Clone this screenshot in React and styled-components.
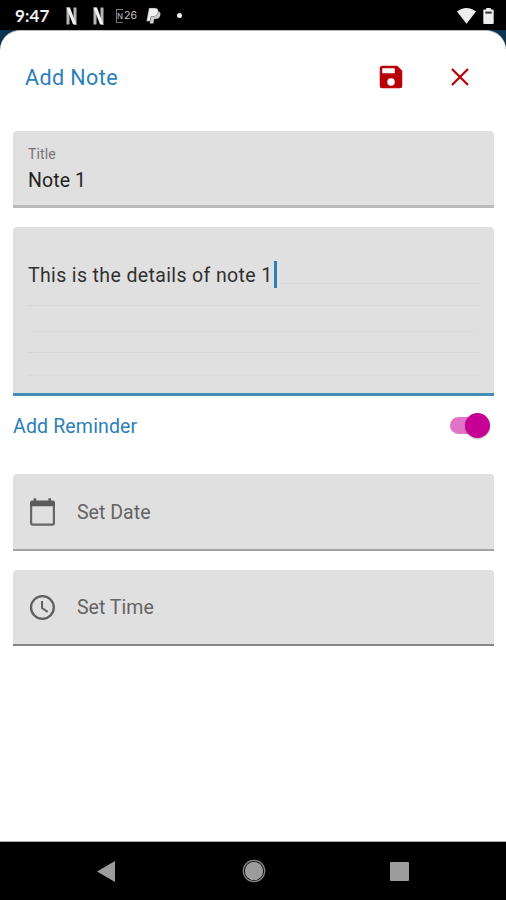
import React from 'react';
import styled, { createGlobalStyle } from 'styled-components';

const Global = createGlobalStyle`
  * { box-sizing: border-box; }
  body { margin: 0; background: #000; }
`;

const Screen = styled.div`
  width: 506px;
  height: 900px;
  display: flex;
  flex-direction: column;
  overflow: hidden;
  background: #0d344f;
  font-family: Roboto, 'Liberation Sans', sans-serif;
`;

const StatusBar = styled.header`
  height: 30px;
  flex: none;
  display: flex;
  align-items: center;
  padding: 1px 12px 0 15px;
  background: #000;
  color: #f2f2f2;
`;

const Clock = styled.span`
  width: 51px;
  font: 700 17px/20px Lato, sans-serif;
  letter-spacing: 0.1px;
`;

const Notifications = styled.div`
  flex: 1;
  display: flex;
  align-items: center;
`;

const StatusIcon = styled.svg`
  display: block;
  flex: none;
  margin-right: ${(p) => p.$gap || 0}px;
  overflow: visible;
`;

const BankBadge = styled.span`
  display: flex;
  align-items: center;
  width: 30px;
  font: 400 10.5px/12px Inter, sans-serif;
  color: #c4c4c4;
`;

const BankInitial = styled.span`
  width: 7px;
  height: 14px;
  margin-right: 1px;
  border: solid #777;
  border-width: 1px 0 1px 1px;
  font-size: 8px;
  line-height: 12px;
`;

const Dot = styled.span`
  width: 5px;
  height: 5px;
  border-radius: 50%;
  background: #eee;
`;

const Sheet = styled.main`
  flex: 1;
  display: flex;
  flex-direction: column;
  padding: 0 12px 0 13px;
  border-top: 1px solid #bbb;
  border-bottom: 1px solid #aaa;
  border-radius: 20px 20px 0 0;
  background: #fff;
`;

const TitleBar = styled.div`
  height: 100px;
  flex: none;
  display: flex;
  align-items: center;
  padding: 0 25px 8px 12px;
`;

const Heading = styled.h1`
  flex: 1;
  margin: 0;
  padding-top: 2px;
  font-size: 21.5px;
  font-weight: 400;
  line-height: 28px;
  letter-spacing: 0.42px;
  color: #2a80b9;
`;

const IconButton = styled.button`
  display: flex;
  padding: 0;
  border: 0;
  background: none;
  color: #b90008;
  margin-left: ${(p) => p.$gap || 0}px;
`;

const Field = styled.div`
  flex: none;
  height: ${(p) => p.$height}px;
  margin-bottom: ${(p) => p.$gap}px;
  padding: ${(p) => p.$pad || '0 15px'};
  display: flex;
  flex-direction: ${(p) => (p.$row ? 'row' : 'column')};
  align-items: ${(p) => (p.$row ? 'center' : 'stretch')};
  border-bottom: ${(p) => p.$line};
  border-radius: 4px 4px 0 0;
  background: #e0e0e0;
`;

const Label = styled.label`
  font-size: 14px;
  line-height: 16px;
  letter-spacing: 0.15px;
  color: #757575;
`;

const Value = styled.span`
  margin-top: 7px;
  font-size: 19.5px;
  line-height: 24px;
  letter-spacing: 0.1px;
  color: #242424;
`;

const NoteText = styled.div`
  height: 27px;
  display: flex;
  font-size: 19.5px;
  line-height: 29px;
  letter-spacing: 0.37px;
  white-space: nowrap;
  color: #303030;
`;

const Caret = styled.span`
  width: 3px;
  height: 27px;
  margin-left: 1px;
  background: #2a80b9;
`;

const NoteBody = styled.div`
  height: 116px;
  display: flex;
  flex-direction: column;
  background-image: linear-gradient(#d9d9d9, #d9d9d9), linear-gradient(#d7d7d7, #d7d7d7),
    linear-gradient(#dbdbdb, #dbdbdb), linear-gradient(#d7d7d7, #d7d7d7),
    linear-gradient(#dadada, #dadada);
  background-size: 200px 1px, 100% 1px, 100% 1px, 100% 1px, 100% 1px;
  background-repeat: no-repeat;
  background-position: 252px 22px, 0 44px, 0 70px, 0 91px, 0 114px;
`;

const Prompt = styled.span`
  padding-top: 2px;
  font-size: 19.5px;
  line-height: 24px;
  letter-spacing: 0.03px;
  color: #646464;
  margin-left: 20px;
`;

const ReminderRow = styled.div`
  flex: none;
  height: 58px;
  margin-bottom: 20px;
  display: flex;
  align-items: center;
  justify-content: space-between;
  padding-right: 4px;
`;

const ReminderLabel = styled.span`
  padding-top: 4px;
  font-size: 19.5px;
  line-height: 24px;
  letter-spacing: 0.16px;
  color: #2a80b9;
`;

const Track = styled.span`
  width: 36px;
  height: 17px;
  margin-right: 4px;
  border-radius: 9px;
  background: #e274c7;
  display: flex;
  align-items: center;
  justify-content: flex-end;
`;

const Thumb = styled.span`
  flex: none;
  width: 25px;
  height: 25px;
  margin-right: -4px;
  border-radius: 50%;
  background: #c60094;
  box-shadow: 0 1px 2px rgba(0, 0, 0, 0.3);
`;

const NavBar = styled.nav`
  height: 58px;
  flex: none;
  display: grid;
  grid-template-columns: 211px 85px 207px;
  align-items: center;
  justify-items: center;
  background: #000;
`;

const NavIcon = styled.svg`
  display: block;
`;

const NetflixMark = ({ gap }) => (
  <StatusIcon $gap={gap} width="11" height="18" viewBox="0 0 11 18">
    <path d="M.5.5h3v16.7l-3 .5zM7.5.5h3v17.2l-3-.5z" fill="#b5b5b5" />
    <path d="M.5.5h3.4l6.6 17.2-3.5-.5z" fill="#f1f1f1" />
  </StatusIcon>
);

export default function App() {
  return (
    <>
      <Global />
      <Screen>
        <StatusBar>
          <Clock>9:47</Clock>
          <Notifications>
            <NetflixMark gap={16} />
            <NetflixMark gap={12} />
            <BankBadge><BankInitial>N</BankInitial>26</BankBadge>
            <StatusIcon $gap={16} width="15" height="16" viewBox="0 0 15 16">
              <path d="M5.2 3.2h6.3c2.5 0 3.4 1.7 2.8 4-.7 2.7-2.3 3.8-4.9 3.8H8.2l-.9 4.6H3.8z" fill="#cfcfcf" />
              <path d="M3 0h5.7c2.9 0 4 1.7 3.5 4.1-.6 2.9-2.6 4.5-5.4 4.5H5L4.1 13.2H.5z" fill="#f0f0f0" stroke="#333" strokeWidth=".4" />
            </StatusIcon>
            <Dot />
          </Notifications>
          <StatusIcon $gap={7} width="19" height="16" viewBox="0 0 19 16">
            <path d="M0 3.6C5.5-1.2 13.5-1.2 19 3.6L9.5 15.8z" fill="#ededed" />
          </StatusIcon>
          <StatusIcon width="11" height="16" viewBox="0 0 11 16">
            <path d="M3.2 0h4.6v1.6h1.8c.7 0 1.1.4 1.1 1.1v12.2c0 .7-.4 1.1-1.1 1.1H1.4c-.7 0-1.1-.4-1.1-1.1V2.7c0-.7.4-1.1 1.1-1.1h1.8z" fill="#ededed" />
            <path d="M2.3 3.6h6.4v2H2.3z" fill="#333" />
          </StatusIcon>
        </StatusBar>
        <Sheet>
          <TitleBar>
            <Heading>Add Note</Heading>
            <IconButton aria-label="Save">
              <svg width="30" height="30" viewBox="0 0 24 24" fill="currentColor">
                <path d="M17 3H5a2 2 0 0 0-2 2v14a2 2 0 0 0 2 2h14a2 2 0 0 0 2-2V7zM12 19a3 3 0 1 1 0-6 3 3 0 0 1 0 6zM15 9H5V5h10z" />
              </svg>
            </IconButton>
            <IconButton aria-label="Close" $gap={45}>
              <svg width="18" height="18" viewBox="0 0 18 18" fill="none" stroke="currentColor" strokeWidth="2.2">
                <path d="M1 1l16 16M17 1L1 17" />
              </svg>
            </IconButton>
          </TitleBar>
          <Field $height={77} $gap={19} $pad="15px 15px 0" $line="3px solid #bbb">
            <Label>Title</Label>
            <Value>Note 1</Value>
          </Field>
          <Field $height={169} $gap={0} $pad="34px 15px 0" $line="3px solid #438db9">
            <NoteBody>
              <NoteText>This is the details of note 1<Caret /></NoteText>
            </NoteBody>
          </Field>
          <ReminderRow>
            <ReminderLabel>Add Reminder</ReminderLabel>
            <Track><Thumb /></Track>
          </ReminderRow>
          <Field $row $height={77} $gap={19} $line="2px solid #a3a3a3">
            <svg width="29" height="30" viewBox="0 0 29 30" fill="none">
              <rect x="3.1" y="5" width="22.8" height="22.6" rx="1.5" stroke="#666" strokeWidth="2.2" />
              <path d="M3.5 3.5h22L27 5v4.3H2V5zM5.6 1.2h2.6v3H5.6zM20.4 1.2h2.6v3h-2.6z" fill="#5b5b5b" />
            </svg>
            <Prompt>Set Date</Prompt>
          </Field>
          <Field $row $height={76} $gap={0} $line="2px solid #858585">
            <svg width="29" height="29" viewBox="0 0 29 29" fill="none" stroke="#5f5f5f">
              <circle cx="14.4" cy="14.5" r="11.4" strokeWidth="2.3" />
              <path d="M14 8v7l5.7 3.8" strokeWidth="2" />
            </svg>
            <Prompt>Set Time</Prompt>
          </Field>
        </Sheet>
        <NavBar>
          <NavIcon width="18" height="21" viewBox="0 0 18 21"><path d="M18 0v21L0 10.5z" fill="#9c9c9c" /></NavIcon>
          <NavIcon width="24" height="24" viewBox="0 0 24 24">
            <circle cx="12" cy="12" r="10.7" fill="none" stroke="#858585" strokeWidth="1.3" />
            <circle cx="12" cy="12" r="9.2" fill="#9c9c9c" />
          </NavIcon>
          <NavIcon width="19" height="19" viewBox="0 0 19 19"><rect width="19" height="19" rx="1" fill="#9c9c9c" /></NavIcon>
        </NavBar>
      </Screen>
    </>
  );
}
